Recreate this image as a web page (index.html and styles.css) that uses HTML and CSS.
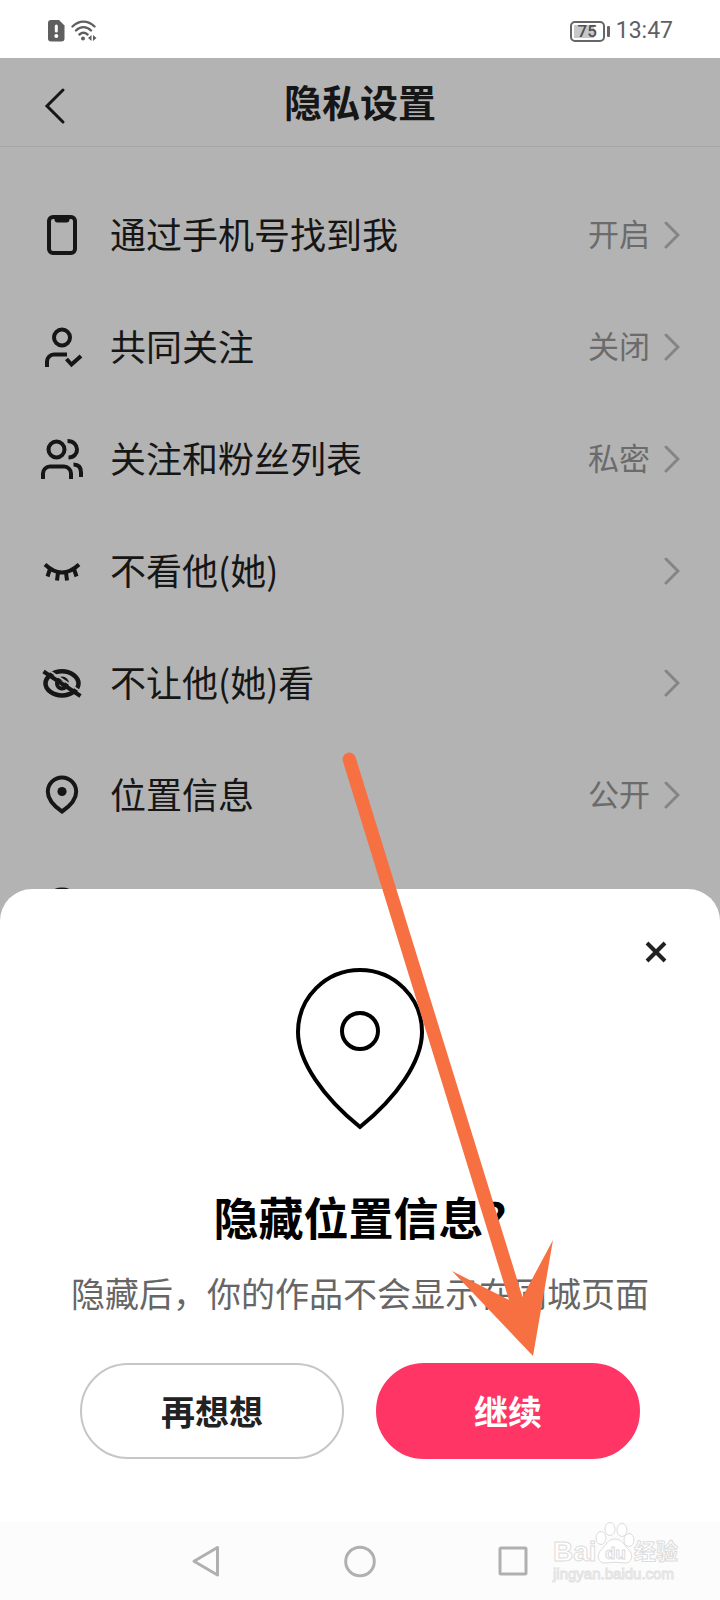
FILE: index.html
```html
<!DOCTYPE html>
<html lang="zh-CN">
<head>
<meta charset="utf-8">
<meta name="viewport" content="width=device-width, initial-scale=1">
<title>隐私设置</title>
<link rel="stylesheet" href="styles.css">
</head>
<body>
<div class="phone">
  <div class="status">
    <div class="status-group">
      <svg width="17" height="22" viewBox="0 0 17 22" aria-hidden="true"><path fill="#5f5f5f" d="M3 0h8l5.500 5.500V18.500a3 3 0 0 1-3 3H3a3 3 0 0 1-3-3V3a3 3 0 0 1 3-3z"/><path stroke="#fff" stroke-width="3" stroke-linecap="round" d="M8.300 6v5"/><circle cx="8.300" cy="16" r="2" fill="#fff"/></svg>
      <svg width="26" height="22" viewBox="0 0 26 22" aria-hidden="true" fill="none" stroke="#5f5f5f" stroke-width="2.400" stroke-linecap="round"><path d="M1.500 6.500C8 0 17 0 23.500 6.500M5 10.500c4.500-4.500 10.500-4.500 15 0M8.500 14.500c2.500-2.300 5.500-2.300 8 0"/><circle cx="12" cy="18.500" r="2" fill="#5f5f5f" stroke="none"/><path d="M20.500 15v6l-3.500-3zM22 15v6l3.500-3z" fill="#5f5f5f" stroke="none"/></svg>
    </div>
    <div class="status-group">
      <div class="battery"><span class="battery-level">75</span></div>
      <time class="clock">13:47</time>
    </div>
  </div>

  <main class="app">
    <header class="header">
      <button class="back" type="button" aria-label="返回"><svg width="24" height="40" viewBox="0 0 24 40"><path d="M20 4 4 20l16 16" fill="none" stroke="#161616" stroke-width="3" stroke-linecap="round"/></svg></button>
      <h1 class="title">隐私设置</h1>
    </header>

    <ul class="list">
      <li><a class="row" href="#phone">
        <svg class="icon" viewBox="0 0 48 48"><rect x="11" y="6" width="26" height="36" rx="4"/><path class="solid" d="M16.500 6h15v2.500a3 3 0 0 1-3 3h-9a3 3 0 0 1-3-3z"/></svg>
        <span class="label">通过手机号找到我</span><span class="value">开启</span>
        <svg class="chevron" viewBox="0 0 16 28"><path d="M2 2l12 12L2 26"/></svg></a></li>
      <li><a class="row" href="#mutual">
        <svg class="icon" viewBox="0 0 48 48"><circle cx="24" cy="14.500" r="8"/><path d="M9 44v-5.500a7 7 0 0 1 7-7h13M28.500 36l5 5.500L43 33"/></svg>
        <span class="label">共同关注</span><span class="value">关闭</span>
        <svg class="chevron" viewBox="0 0 16 28"><path d="M2 2l12 12L2 26"/></svg></a></li>
      <li><a class="row" href="#followers">
        <svg class="icon" viewBox="0 0 48 48"><circle cx="18.500" cy="14.500" r="8"/><path d="M29.500 6c12.500 0 12.500 16.500 1 16.500M5 44v-5.500a7 7 0 0 1 7-7h14a7 7 0 0 1 7 7V44M35.500 29.500q7.500 0 7.500 8V42"/></svg>
        <span class="label">关注和粉丝列表</span><span class="value">私密</span>
        <svg class="chevron" viewBox="0 0 16 28"><path d="M2 2l12 12L2 26"/></svg></a></li>
      <li><a class="row" href="#not-watching">
        <svg class="icon" viewBox="0 0 48 48"><path d="M7 17.500q17 16 34 0M12 22l-2.500 7.500M20 25.500l-1 8M28 25.500l1 8M36 22l2.500 7.500"/></svg>
        <span class="label">不看他(她)</span>
        <svg class="chevron" viewBox="0 0 16 28"><path d="M2 2l12 12L2 26"/></svg></a></li>
      <li><a class="row" href="#hidden-from">
        <svg class="icon" viewBox="0 0 48 48"><path stroke-width="4.500" d="M7.500 24.500c0-6.500 8-12.300 16.500-12.300s16.500 5.800 16.500 12.300S32.500 36.500 24 36.500 7.500 31 7.500 24.500z"/><circle cx="24" cy="24.500" r="5"/><path class="gap" d="M8 9.500l37 24.500"/><path d="M5.500 12.500L42.500 37"/></svg>
        <span class="label">不让他(她)看</span>
        <svg class="chevron" viewBox="0 0 16 28"><path d="M2 2l12 12L2 26"/></svg></a></li>
      <li><a class="row" href="#location">
        <svg class="icon" viewBox="0 0 48 48"><path d="M24 40.500C14.500 34 9.800 28 9.800 20.700a14.200 14.200 0 0 1 28.400 0C38.200 28 33.500 34 24 40.500z"/><circle class="solid" cx="24" cy="20.500" r="4.600"/></svg>
        <span class="label">位置信息</span><span class="value">公开</span>
        <svg class="chevron" viewBox="0 0 16 28"><path d="M2 2l12 12L2 26"/></svg></a></li>
      <li class="row" aria-hidden="true">
        <svg class="icon" viewBox="0 0 48 48"><circle cx="24" cy="24" r="17.500"/></svg></li>
    </ul>

    <section class="sheet" role="dialog" aria-labelledby="sheet-title">
      <button class="close" type="button" aria-label="关闭"><svg width="24" height="24" viewBox="0 0 24 24"><path d="M3 3l18 18M21 3 3 21" stroke="#222" stroke-width="4"/></svg></button>
      <svg class="pin" viewBox="0 0 132 164" aria-hidden="true"><path d="M66 159C30 130 4 94 4 64a62 62 0 0 1 124 0c0 30-26 66-62 95z"/><circle cx="66" cy="63" r="18"/></svg>
      <h2 class="sheet-title" id="sheet-title">隐藏位置信息?</h2>
      <p class="sheet-text">隐藏后，你的作品不会显示在同城页面</p>
      <div class="actions">
        <button class="btn" type="button">再想想</button>
        <button class="btn btn-primary" type="button">继续</button>
      </div>
    </section>
  </main>

  <nav class="navbar" aria-label="系统导航">
    <button class="nav-btn" type="button" aria-label="返回"><svg viewBox="0 0 36 36"><path d="M28.500 4.500v27.500L5 18.200z"/></svg></button>
    <button class="nav-btn" type="button" aria-label="主页"><svg viewBox="0 0 36 36"><circle cx="18" cy="18.500" r="14.300"/></svg></button>
    <button class="nav-btn" type="button" aria-label="最近任务"><svg viewBox="0 0 36 36"><rect x="5" y="5" width="26" height="26" rx="1"/></svg></button>
  </nav>

  <svg class="watermark" width="136" height="66" viewBox="0 0 136 66" aria-label="Baidu 经验">
    <text x="1" y="39" class="wm-latin" font-size="28">Bai</text>
    <path d="M63 17c-8 0-9 7-14 11-5 5-3 14 5 13 6-1 12-1 18 0 8 1 10-8 5-13-5-4-6-11-14-11z"/>
    <ellipse cx="49" cy="16" rx="5" ry="6.500"/><ellipse cx="58" cy="7" rx="5" ry="6.500"/><ellipse cx="70" cy="8" rx="5" ry="6.500"/><ellipse cx="77" cy="18" rx="5" ry="6.500"/>
    <text x="53" y="37" class="wm-latin" font-size="17">du</text>
    <text x="82" y="37" class="wm-cjk" font-size="22">经验</text>
    <text x="1" y="57" class="wm-latin wm-url" font-size="15">jingyan.baidu.com</text>
  </svg>

  <svg class="arrow" width="216" height="610" viewBox="0 0 216 610" aria-hidden="true"><path fill="#f67041" d="M3 11.500A6.500 6.500 0 0 1 15.500 7L182.500 547 213 490 193 606 112 521l57 29z"/></svg>
</div>
</body>
</html>
```
FILE: styles.css
```css
* { box-sizing: border-box; }

body {
  margin: 0;
  background: #fff;
  font-family: "Noto Sans CJK SC", sans-serif;
}

button {
  margin: 0;
  padding: 0;
  border: 0;
  background: none;
  font: inherit;
  cursor: pointer;
}

svg { display: block; }

.phone {
  position: relative;
  display: flex;
  flex-direction: column;
  min-height: 100vh;
}

.status {
  display: flex;
  justify-content: space-between;
  align-items: center;
  height: 58px;
  padding: 4px 47px 0 48px;
  color: #5f5f5f;
  font-family: Roboto, sans-serif;
}

.status-group {
  display: flex;
  align-items: center;
  gap: 6px;
}

.battery {
  position: relative;
  width: 35px;
  height: 21px;
  margin-right: 5px;
  padding: 2px;
  border: 2px solid #666;
  border-radius: 5px;
}

.battery::after {
  content: "";
  position: absolute;
  top: 3px;
  right: -7px;
  width: 3px;
  height: 11px;
  border-radius: 1px;
  background: #666;
}

.battery-level {
  display: block;
  background: linear-gradient(to right, #c8c8c8 75%, #fff 75%);
  color: #505050;
  font-size: 17px;
  font-weight: 500;
  line-height: 13px;
  text-align: center;
}

.clock {
  font-size: 23px;
  line-height: 24px;
}

.app {
  position: relative;
  flex: 1;
  overflow: hidden;
  background: #b3b3b3;
  color: #161616;
}

.header {
  display: grid;
  grid-template-columns: 80px 1fr 80px;
  align-items: center;
  height: 89px;
  border-bottom: 1px solid #a6a6a6;
}

.back {
  justify-self: center;
  padding: 8px 0 0 30px;
}

.title {
  margin: 0;
  padding-bottom: 2px;
  font-size: 38px;
  font-weight: 700;
  line-height: 56px;
  text-align: center;
}

.list {
  margin: 0;
  padding: 32px 0 0;
  list-style: none;
}

.row {
  display: flex;
  align-items: center;
  height: 112px;
  padding: 0 40px 0 38px;
  color: inherit;
  text-decoration: none;
}

.icon {
  flex: none;
  width: 48px;
  height: 48px;
  margin-right: 24px;
  fill: none;
  stroke: #161616;
  stroke-width: 4;
}

.icon .solid {
  fill: #161616;
  stroke: none;
}

.icon .gap {
  stroke: #b3b3b3;
  stroke-width: 2;
}

.label {
  flex: 1;
  padding-bottom: 5px;
  font-size: 36px;
  line-height: 52px;
}

.value {
  padding-bottom: 4px;
  color: #6b6b6b;
  font-size: 31px;
  line-height: 44px;
}

.chevron {
  width: 16px;
  height: 28px;
  margin-left: 14px;
  fill: none;
  stroke: #858585;
  stroke-width: 3;
  stroke-linecap: round;
}

.sheet {
  position: absolute;
  right: 0;
  bottom: 0;
  left: 0;
  display: flex;
  flex-direction: column;
  align-items: center;
  padding: 51px 52px 63px;
  border-radius: 32px 32px 0 0;
  background: #fff;
}

.close { align-self: flex-end; }

.pin {
  width: 132px;
  height: 164px;
  margin-top: 4px;
  fill: none;
  stroke: #000;
  stroke-width: 4;
}

.sheet-title {
  margin: 53px 0 0;
  color: #000;
  font-size: 45px;
  font-weight: 700;
  line-height: 64px;
}

.sheet-text {
  margin: 20px 0 0;
  color: #666;
  font-size: 34px;
  line-height: 48px;
  white-space: nowrap;
}

.actions {
  display: flex;
  gap: 32px;
  align-self: stretch;
  margin-top: 46px;
  padding: 0 28px;
}

.btn {
  flex: 1;
  height: 96px;
  border: 2px solid #c6c6c6;
  border-radius: 48px;
  color: #222;
  font-size: 34px;
  font-weight: 700;
  line-height: 48px;
}

.btn-primary {
  border-color: #ff3665;
  background: #ff3665;
  color: #fff;
}

.navbar {
  display: flex;
  justify-content: center;
  align-items: center;
  gap: 117px;
  height: 78px;
  background: #fcfcfc;
}

.nav-btn svg {
  width: 36px;
  height: 36px;
  fill: none;
  stroke: #b0b0b0;
  stroke-width: 3;
  stroke-linejoin: round;
}

.watermark {
  position: absolute;
  right: 32px;
  bottom: 12px;
  fill: #fff;
  stroke: #dcdcdc;
  stroke-width: 1;
}

.wm-latin { font-family: "Liberation Sans", sans-serif; font-weight: 700; }
.wm-cjk { font-family: "Noto Sans CJK SC", sans-serif; font-weight: 700; }
.wm-url { font-weight: 400; stroke: #e2e2e2; }

.arrow {
  position: absolute;
  bottom: 240px;
  left: 340px;
  pointer-events: none;
}
```
